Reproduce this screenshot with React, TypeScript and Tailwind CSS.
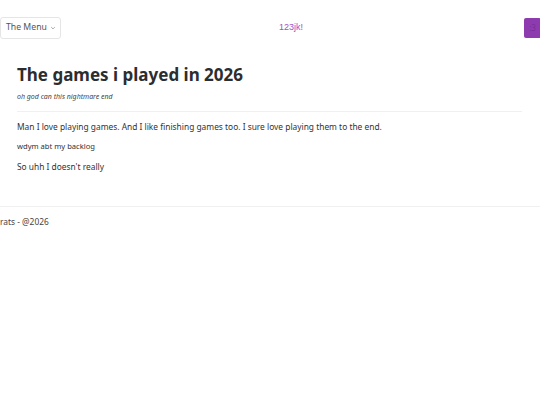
export default function App() {
  return (
    <div className="min-h-[405px] bg-white text-[#333] font-['Noto_Sans',sans-serif]">
      <header className="flex items-center justify-between h-[54px] pt-[1px]">
        <button className="flex items-center gap-[3px] h-[22px] pl-[5px] pr-[4px] border border-[#e5e5e5] rounded-[3px] text-[8.7px] text-[#555]">
          The Menu
          <svg width="6" height="6" viewBox="0 0 10 10">
            <path d="M2 3.5 L5 6.5 L8 3.5" fill="none" stroke="#888" strokeWidth="1.2" />
          </svg>
        </button>
        <span className="text-[9px] text-[#a54ec6] font-['Liberation_Sans',sans-serif] ml-[218px]">123jk!</span>
        <div className="flex-1" />
        <button className="w-[17px] h-[20px] mr-[-1px] rounded-[2px] bg-[#8e3bb0] text-[8px] text-[#7a2f98] flex items-center justify-center">
          :3
        </button>
      </header>
      <main className="px-[17px]">
        <h1 className="text-[17px] font-bold text-[#2b2d31] leading-[24px] mt-[9px]">The games i played in 2026</h1>
        <p className="text-[7px] italic text-[#444] mt-[5px]">oh god can this nightmare end</p>
        <hr className="border-[#f0f0f0] mt-[8px] mr-[1px]" />
        <p className="text-[8.4px] text-[#333] mt-[9px]">
          Man I love playing games. And I like finishing games too. I sure love playing them to the end.
        </p>
        <p className="text-[7.6px] text-[#333] mt-[8px]">wdym abt my backlog</p>
        <p className="text-[8.4px] text-[#333] mt-[8px]">So uhh I doesn't really</p>
      </main>
      <footer className="mt-[33px] border-t border-[#f0f0f0] pt-[9px]">
        <p className="text-[8.4px] text-[#444]">rats - @2026</p>
      </footer>
    </div>
  );
}
